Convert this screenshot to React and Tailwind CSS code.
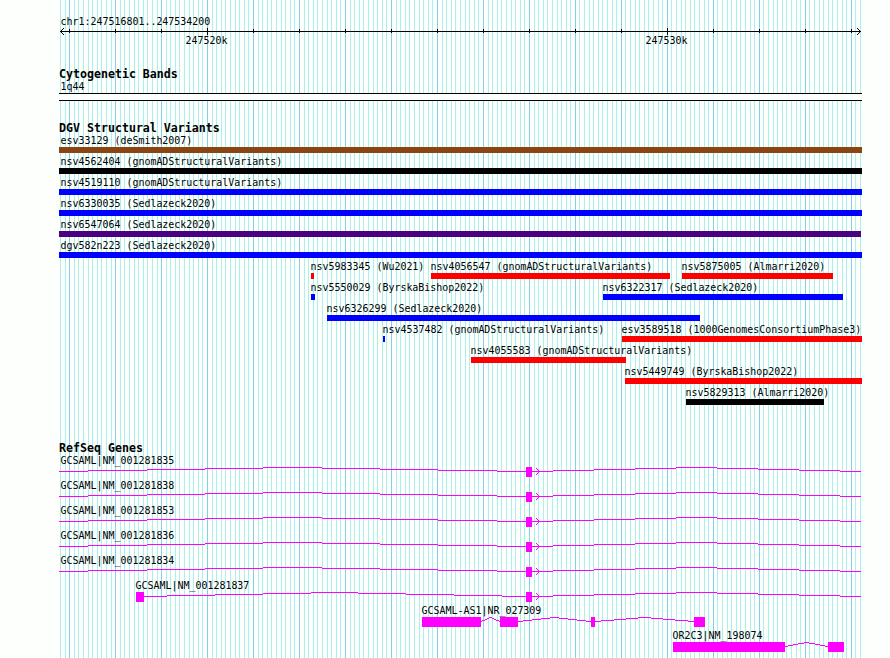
import React from "react";

const START = 247516801;
const SCALE = 800 / 17400;
const toX = (pos) => Math.round(60 + (pos - START) * SCALE);

const gridLines = [];
for (let pos = 247516800; pos <= 247534200; pos += 100) {
  gridLines.push({ x: toX(pos), major: pos % 1000 === 0 });
}

const BLUE = "#0000ff";
const RED = "#ff0000";
const variants = [
  [["esv33129 (deSmith2007)", 59, 862, "#8b4513"]],
  [["nsv4562404 (gnomADStructuralVariants)", 59, 862, "#000000"]],
  [["nsv4519110 (gnomADStructuralVariants)", 59, 862, BLUE]],
  [["nsv6330035 (Sedlazeck2020)", 59, 862, BLUE]],
  [["nsv6547064 (Sedlazeck2020)", 59, 861, "#4b0082"]],
  [["dgv582n223 (Sedlazeck2020)", 59, 862, BLUE]],
  [
    ["nsv5983345 (Wu2021)", 311, 314, RED],
    ["nsv4056547 (gnomADStructuralVariants)", 431, 670, RED],
    ["nsv5875005 (Almarri2020)", 682, 833, RED],
  ],
  [
    ["nsv5550029 (ByrskaBishop2022)", 311, 315, BLUE],
    ["nsv6322317 (Sedlazeck2020)", 603, 843, BLUE],
  ],
  [["nsv6326299 (Sedlazeck2020)", 327, 700, BLUE]],
  [
    ["nsv4537482 (gnomADStructuralVariants)", 383, 385, BLUE],
    ["esv3589518 (1000GenomesConsortiumPhase3)", 622, 862, RED],
  ],
  [["nsv4055583 (gnomADStructuralVariants)", 471, 626, RED]],
  [["nsv5449749 (ByrskaBishop2022)", 625, 862, RED]],
  [["nsv5829313 (Almarri2020)", 686, 824, "#000000"]],
];

const longGene = (name) => ({
  name,
  labelX: 60.5,
  exons: [[526, 532]],
  introns: [[59, 526, 292.5], [532, 861, 696.5]],
  arrow: true,
});
const genes = [
  longGene("GCSAML|NM_001281835"),
  longGene("GCSAML|NM_001281838"),
  longGene("GCSAML|NM_001281853"),
  longGene("GCSAML|NM_001281836"),
  longGene("GCSAML|NM_001281834"),
  {
    name: "GCSAML|NM_001281837",
    labelX: 135.5,
    exons: [[136, 144], [526, 532]],
    introns: [[143, 526, 334.5], [532, 861, 696.5]],
    arrow: true,
  },
  {
    name: "GCSAML-AS1|NR_027309",
    labelX: 421.5,
    exons: [[422, 481], [500, 518], [591, 595], [694, 705]],
    introns: [[481, 500, 490.5], [518, 591, 554.5], [595, 694, 644.5]],
  },
  {
    name: "OR2C3|NM_198074",
    labelX: 672.5,
    exons: [[673, 785], [828, 844]],
    introns: [[785, 828, 806.5]],
  },
];

// Rising and falling intron line, stepped on whole pixels.
function intronPath([from, to, peak]) {
  const yAt = (x) => {
    const edge = x < peak ? from : to;
    return 17 - Math.round((4 * Math.abs(x + 0.5 - edge)) / Math.abs(peak - edge));
  };
  let d = "";
  let runStart = from;
  for (let x = from + 1; x <= to; x++) {
    if (x === to || yAt(x) !== yAt(runStart)) {
      d += `M${runStart} ${yAt(runStart) + 0.5}H${x}`;
      runStart = x;
    }
  }
  return d;
}

function Label({ children }) {
  return (
    <p className="h-[13px] origin-[0_10px] scale-y-110 font-['DejaVu_Sans_Mono',monospace] text-[9.966px] leading-[13px] whitespace-pre">
      {children}
    </p>
  );
}

function Title({ children }) {
  return (
    <h2 className="h-[13px] pl-[59px] font-['DejaVu_Sans_Mono',monospace] text-[11.627px] leading-[14px] font-bold whitespace-pre">
      {children}
    </h2>
  );
}

function Grid() {
  return (
    <svg className="absolute inset-0" width="890" height="658" shapeRendering="crispEdges">
      {gridLines.map(({ x, major }) => (
        <rect key={x} x={x} y="0" width="1" height="658" fill={major ? "#87ceeb" : "#afeeee"} />
      ))}
    </svg>
  );
}

function Ruler() {
  return (
    <svg className="block" width="890" height="8" shapeRendering="crispEdges" stroke="#000" fill="none">
      <path d="M60 3.5H861" />
      {gridLines
        .filter((line) => line.major)
        .map(({ x }) => (
          <path key={x} d={x === 207 || x === 667 ? `M${x + 0.5} 0V7` : `M${x + 0.5} 1V5`} />
        ))}
      <path d="M61 2.5h1M62 1.5h1M63 0.5h1M61 4.5h1M62 5.5h1M63 6.5h1" />
      <path d="M859 2.5h1M858 1.5h1M857 0.5h1M859 4.5h1M858 5.5h1M857 6.5h1" />
    </svg>
  );
}

function Variant({ name, from, to, color }) {
  return (
    <div className="absolute top-0" style={{ left: from, width: to - from }}>
      <div className={from === 59 ? "ml-[1.5px]" : "-ml-[0.5px]"}>
        <Label>{name}</Label>
      </div>
      <div className="h-[6px]" style={{ backgroundColor: color }} />
    </div>
  );
}

function Gene({ gene }) {
  return (
    <li className="relative h-[25px]">
      <svg className="absolute inset-0" width="890" height="25" shapeRendering="crispEdges" stroke="#ff00ff" fill="none">
        {gene.introns.map((intron) => (
          <path key={intron[0]} d={intronPath(intron)} />
        ))}
        {gene.exons.map(([from, to]) => (
          <rect key={from} x={from} y="13" width={to - from} height="10" fill="#ff00ff" stroke="none" />
        ))}
        {gene.arrow && (
          <path d="M536 14.5h1M537 15.5h1M538 16.5h1M538 18.5h1M537 19.5h1M536 20.5h1" />
        )}
      </svg>
      <div className="relative" style={{ paddingLeft: gene.labelX }}>
        <Label>{gene.name}</Label>
      </div>
    </li>
  );
}

export default function App() {
  return (
    <div className="relative h-[658px] w-[890px] overflow-hidden bg-[#fdfffc] text-black">
      <Grid />
      <main className="relative flex flex-col pt-[15px]">
        <header className="flex h-[52px] flex-col">
          <div className="pl-[60.5px]">
            <Label>chr1:247516801..247534200</Label>
          </div>
          <Ruler />
          <div className="-mt-[2px] flex gap-[418px] pl-[185.5px]">
            <Label>247520k</Label>
            <Label>247530k</Label>
          </div>
        </header>

        <section className="flex h-[54px] flex-col">
          <Title>Cytogenetic Bands</Title>
          <div className="pl-[60.5px]">
            <Label>1q44</Label>
          </div>
          <div className="ml-[59px] h-[8px] w-[803px] border-y border-black bg-[#fdfffc]" />
        </section>

        <section className="flex h-[320px] flex-col">
          <Title>DGV Structural Variants</Title>
          {variants.map((row) => (
            <div key={row[0][0]} className="relative h-[21px]">
              {row.map(([name, from, to, color]) => (
                <Variant key={name} name={name} from={from} to={to} color={color} />
              ))}
            </div>
          ))}
        </section>

        <section className="flex flex-col">
          <Title>RefSeq Genes</Title>
          <ul>
            {genes.map((gene) => (
              <Gene key={gene.name} gene={gene} />
            ))}
          </ul>
        </section>
      </main>
    </div>
  );
}
